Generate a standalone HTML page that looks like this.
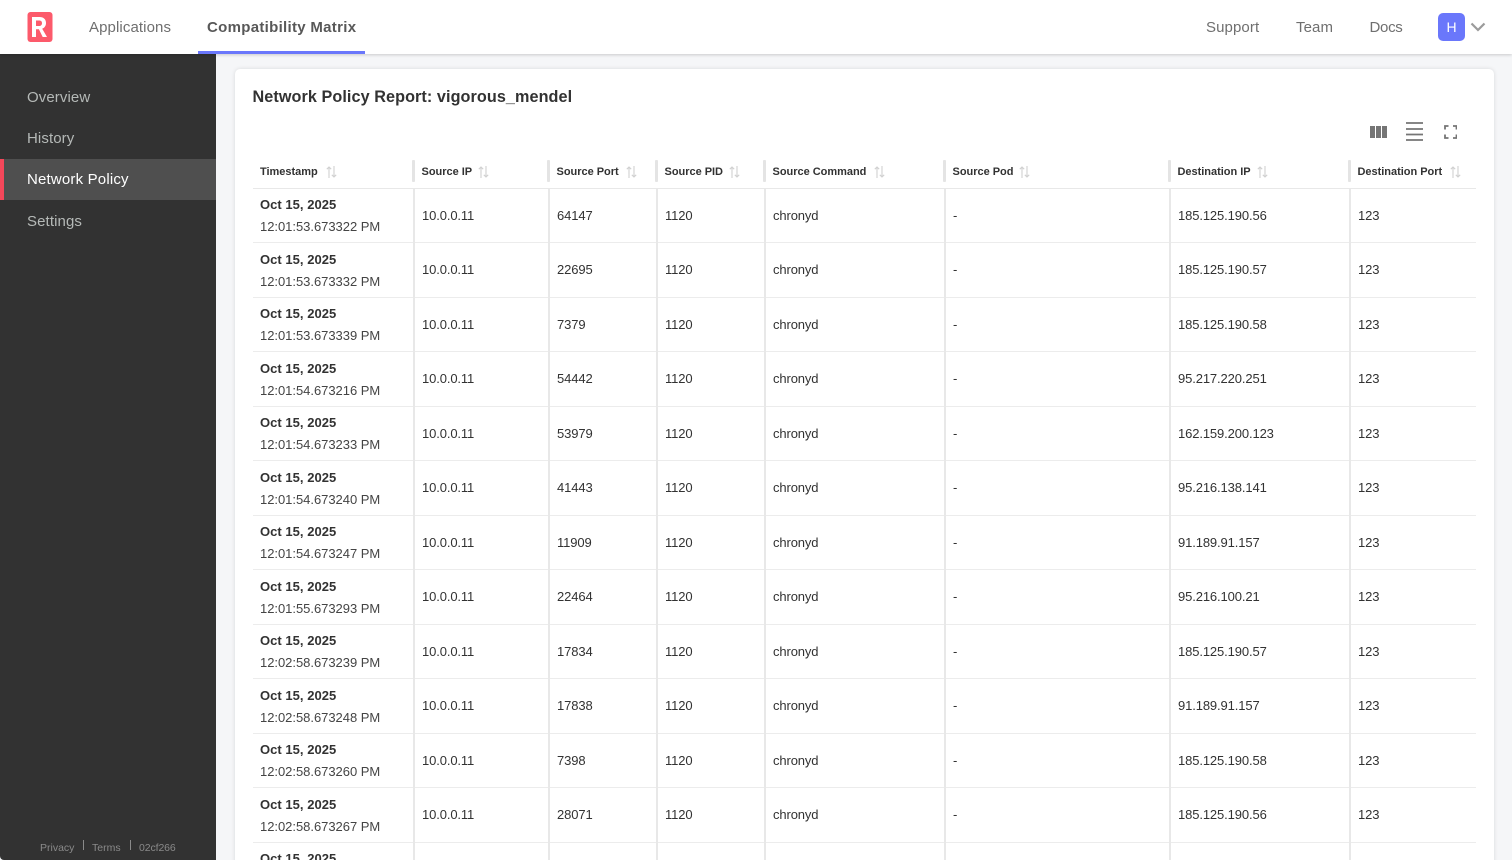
<!DOCTYPE html>
<html><head><meta charset="utf-8"><title>Network Policy</title>
<style>
*{box-sizing:border-box}
html,body{margin:0;padding:0;width:1512px;height:860px;overflow:hidden;background:#f5f6f8;font-family:"Liberation Sans",sans-serif;color:#323232}
#wrap{position:relative;width:1512px;height:860px;overflow:hidden;background:#f5f6f8}
.abs{position:absolute;white-space:nowrap}
#top{position:absolute;left:0;top:0;width:1512px;height:54px;background:#fff;box-shadow:0 1px 3px rgba(0,0,0,.18);z-index:3}
.nv{position:absolute;top:18px;font-size:15px;line-height:19px;color:#6f6f6f;letter-spacing:.1px;white-space:nowrap}
#side{position:absolute;left:0;top:54px;width:216px;height:806px;background:#323232;border-bottom-left-radius:4px;z-index:2}
.si{position:absolute;left:0;width:216px;height:41.5px;line-height:41.5px;padding-left:27px;font-size:15px;color:#b5b9b7;letter-spacing:.1px}
.si.on{background:#4f4f4f;color:#fff;border-left:4px solid #f4475a;padding-left:23px;line-height:42.5px;letter-spacing:.18px}
.ft{position:absolute;top:786.5px;font-size:10.5px;line-height:14px;color:#8a8a8a;letter-spacing:0}
#card{position:absolute;left:235px;top:69px;width:1259px;height:820px;background:#fff;border-radius:5px;box-shadow:0 0 4px rgba(0,0,0,.12)}
h1{position:absolute;left:252.5px;top:87px;margin:0;font-size:16.2px;line-height:21px;font-weight:bold;color:#323232;letter-spacing:.08px;white-space:nowrap}
table{position:absolute;left:253px;top:154px;width:1223px;table-layout:fixed;border-collapse:collapse;font-size:13px;color:#323232}
th{height:34px;text-align:left;font-size:11px;font-weight:bold;padding:2.5px 0 0 8px;border-bottom:1px solid #e8e8e8;position:relative;white-space:nowrap;letter-spacing:-.02px;vertical-align:middle}
th:first-child{padding-left:7px}
th:not(:first-child)::before{content:"";position:absolute;left:-2px;top:6px;width:3px;height:22px;background:#e4e4e4;border-radius:1px}
th svg{margin-left:3px;vertical-align:-3px}
td{height:54.5px;padding:1px 0 0 7.5px;border-bottom:1px solid #ececec;border-left:2px solid #e8e8e8;white-space:nowrap;overflow:hidden;line-height:22px;letter-spacing:-.12px}
td:first-child{border-left:0;padding:2px 0 0 7px}
td b{display:block;font-size:13px;color:#323232;letter-spacing:.03px}
td span{display:block;font-size:13px;letter-spacing:-.03px;color:#444}
</style></head><body><div id="wrap">
<div id="top">
<svg class="abs" style="left:27px;top:12px" width="26" height="30" viewBox="0 0 26 30"><rect x="0.5" y="0" width="25" height="30" rx="3" fill="#fc5a6b"/><path d="M5 25V5h7.500c4 0 6.500 2.200 6.500 6 0 2.800-1.400 4.800-3.800 5.700L20 25h-4.300l-3.800-7.800H9V25zM9 14h3c1.900 0 3-1 3-2.900S13.900 8.500 12 8.500H9z" fill="#fff"/></svg>
<div class="nv" style="left:89px">Applications</div>
<div class="nv" style="left:207px;font-weight:bold;color:#585858;letter-spacing:.3px">Compatibility Matrix</div>
<div class="abs" style="left:198px;top:51px;width:167px;height:3px;background:#6a77fb"></div>
<div class="nv" style="left:1206px">Support</div>
<div class="nv" style="left:1296px">Team</div>
<div class="nv" style="left:1369.5px;letter-spacing:-.3px">Docs</div>
<div class="abs" style="left:1438px;top:13px;width:27px;height:28px;border-radius:5px;background:#6a77fb;color:#fff;font-size:14px;line-height:28px;text-align:center">H</div>
<svg class="abs" style="left:1470px;top:22px" width="16" height="10" viewBox="0 0 16 10"><path d="M1.500 1.500L8 8l6.500-6.500" fill="none" stroke="#9b9b9b" stroke-width="2.200"/></svg>
</div>
<div id="side">
<div class="si" style="top:22.5px">Overview</div>
<div class="si" style="top:64px">History</div>
<div class="si on" style="top:104.5px">Network Policy</div>
<div class="si" style="top:146.5px">Settings</div>
<div class="ft" style="left:40px">Privacy</div>
<div class="abs" style="left:83px;top:786px;width:1px;height:10px;background:#8a8a8a"></div>
<div class="ft" style="left:92px">Terms</div>
<div class="abs" style="left:130px;top:786px;width:1px;height:10px;background:#8a8a8a"></div>
<div class="ft" style="left:139px;letter-spacing:-.1px">02cf266</div>
</div>
<div id="card"></div>
<h1>Network Policy Report: vigorous_mendel</h1>
<svg class="abs" style="left:1370px;top:126px" width="17" height="12" viewBox="0 0 17 12"><path d="M0 0h5v12H0zM6 0h5v12H6zM12 0h5v12h-5z" fill="#757575"/></svg>
<svg class="abs" style="left:1405px;top:122px" width="18" height="20" viewBox="0 0 18 20"><path d="M1 1h17M1 7h17M1 12.500h17M1 18h17" stroke="#757575" stroke-width="1.800" fill="none"/></svg>
<svg class="abs" style="left:1444px;top:125px" width="13" height="14" viewBox="0 0 13 14"><path d="M1 4.500V1h3.500M9 1h3.500v3.500M1 9.500V13h3.500M12.500 9.500V13H9" stroke="#757575" stroke-width="1.800" fill="none"/></svg>
<table>
<colgroup><col style="width:160.5px"><col style="width:135px"><col style="width:108px"><col style="width:108px"><col style="width:180px"><col style="width:225px"><col style="width:180px"><col></colgroup>
<thead><tr>
<th>Timestamp <svg style="margin-left:5px" width="11" height="12" viewBox="0 0 11 12"><path d="M3 12V1M.8 3.200L3 1l2.200 2.200M8 0v11M5.800 8.800L8 11l2.200-2.200" stroke="#d0d0d0" stroke-width="1.100" fill="none"/></svg></th>
<th>Source IP <svg width="11" height="12" viewBox="0 0 11 12"><path d="M3 12V1M.8 3.200L3 1l2.200 2.200M8 0v11M5.800 8.800L8 11l2.200-2.200" stroke="#d0d0d0" stroke-width="1.100" fill="none"/></svg></th>
<th>Source Port <svg style="margin-left:4px" width="11" height="12" viewBox="0 0 11 12"><path d="M3 12V1M.8 3.200L3 1l2.200 2.200M8 0v11M5.800 8.800L8 11l2.200-2.200" stroke="#d0d0d0" stroke-width="1.100" fill="none"/></svg></th>
<th>Source PID <svg width="11" height="12" viewBox="0 0 11 12"><path d="M3 12V1M.8 3.200L3 1l2.200 2.200M8 0v11M5.800 8.800L8 11l2.200-2.200" stroke="#d0d0d0" stroke-width="1.100" fill="none"/></svg></th>
<th>Source Command <svg style="margin-left:5px" width="11" height="12" viewBox="0 0 11 12"><path d="M3 12V1M.8 3.200L3 1l2.200 2.200M8 0v11M5.800 8.800L8 11l2.200-2.200" stroke="#d0d0d0" stroke-width="1.100" fill="none"/></svg></th>
<th>Source Pod <svg width="11" height="12" viewBox="0 0 11 12"><path d="M3 12V1M.8 3.200L3 1l2.200 2.200M8 0v11M5.800 8.800L8 11l2.200-2.200" stroke="#d0d0d0" stroke-width="1.100" fill="none"/></svg></th>
<th>Destination IP <svg style="margin-left:4px" width="11" height="12" viewBox="0 0 11 12"><path d="M3 12V1M.8 3.200L3 1l2.200 2.200M8 0v11M5.800 8.800L8 11l2.200-2.200" stroke="#d0d0d0" stroke-width="1.100" fill="none"/></svg></th>
<th>Destination Port <svg style="margin-left:5px" width="11" height="12" viewBox="0 0 11 12"><path d="M3 12V1M.8 3.200L3 1l2.200 2.200M8 0v11M5.800 8.800L8 11l2.200-2.200" stroke="#d0d0d0" stroke-width="1.100" fill="none"/></svg></th>
</tr></thead>
<tbody>
<tr><td><b>Oct 15, 2025</b><span>12:01:53.673322 PM</span></td><td>10.0.0.11</td><td>64147</td><td>1120</td><td>chronyd</td><td>-</td><td>185.125.190.56</td><td>123</td></tr>
<tr><td><b>Oct 15, 2025</b><span>12:01:53.673332 PM</span></td><td>10.0.0.11</td><td>22695</td><td>1120</td><td>chronyd</td><td>-</td><td>185.125.190.57</td><td>123</td></tr>
<tr><td><b>Oct 15, 2025</b><span>12:01:53.673339 PM</span></td><td>10.0.0.11</td><td>7379</td><td>1120</td><td>chronyd</td><td>-</td><td>185.125.190.58</td><td>123</td></tr>
<tr><td><b>Oct 15, 2025</b><span>12:01:54.673216 PM</span></td><td>10.0.0.11</td><td>54442</td><td>1120</td><td>chronyd</td><td>-</td><td>95.217.220.251</td><td>123</td></tr>
<tr><td><b>Oct 15, 2025</b><span>12:01:54.673233 PM</span></td><td>10.0.0.11</td><td>53979</td><td>1120</td><td>chronyd</td><td>-</td><td>162.159.200.123</td><td>123</td></tr>
<tr><td><b>Oct 15, 2025</b><span>12:01:54.673240 PM</span></td><td>10.0.0.11</td><td>41443</td><td>1120</td><td>chronyd</td><td>-</td><td>95.216.138.141</td><td>123</td></tr>
<tr><td><b>Oct 15, 2025</b><span>12:01:54.673247 PM</span></td><td>10.0.0.11</td><td>11909</td><td>1120</td><td>chronyd</td><td>-</td><td>91.189.91.157</td><td>123</td></tr>
<tr><td><b>Oct 15, 2025</b><span>12:01:55.673293 PM</span></td><td>10.0.0.11</td><td>22464</td><td>1120</td><td>chronyd</td><td>-</td><td>95.216.100.21</td><td>123</td></tr>
<tr><td><b>Oct 15, 2025</b><span>12:02:58.673239 PM</span></td><td>10.0.0.11</td><td>17834</td><td>1120</td><td>chronyd</td><td>-</td><td>185.125.190.57</td><td>123</td></tr>
<tr><td><b>Oct 15, 2025</b><span>12:02:58.673248 PM</span></td><td>10.0.0.11</td><td>17838</td><td>1120</td><td>chronyd</td><td>-</td><td>91.189.91.157</td><td>123</td></tr>
<tr><td><b>Oct 15, 2025</b><span>12:02:58.673260 PM</span></td><td>10.0.0.11</td><td>7398</td><td>1120</td><td>chronyd</td><td>-</td><td>185.125.190.58</td><td>123</td></tr>
<tr><td><b>Oct 15, 2025</b><span>12:02:58.673267 PM</span></td><td>10.0.0.11</td><td>28071</td><td>1120</td><td>chronyd</td><td>-</td><td>185.125.190.56</td><td>123</td></tr>
<tr><td><b>Oct 15, 2025</b><span>12:03:01.673210 PM</span></td><td></td><td></td><td></td><td></td><td></td><td></td><td></td></tr>
</tbody></table>
</div></body></html>
